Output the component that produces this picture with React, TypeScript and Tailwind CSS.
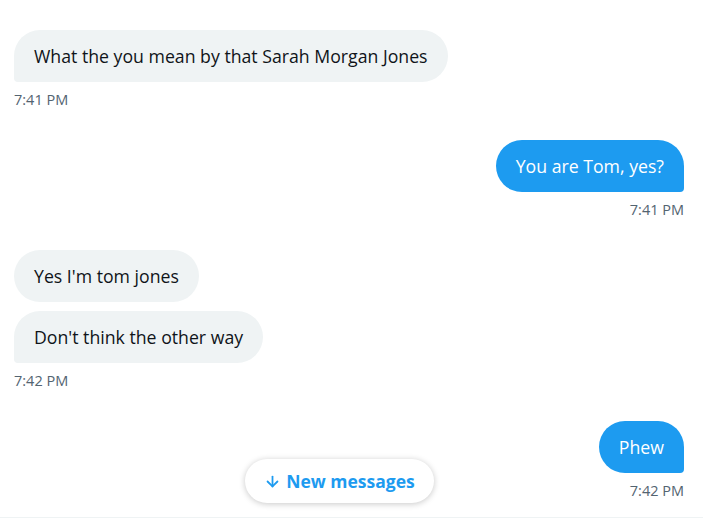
import React from 'react';
import { ArrowDown } from 'lucide-react';

type Msg = {
  text: string;
  mine: boolean;
  tail?: boolean;
};

const messages: Msg[][] = [
  [{ text: 'What the you mean by that Sarah Morgan Jones', mine: false, tail: true }],
  [{ text: 'You are Tom, yes?', mine: true, tail: true }],
  [
    { text: "Yes I'm tom jones", mine: false },
    { text: "Don't think the other way", mine: false, tail: true },
  ],
  [{ text: 'Phew', mine: true, tail: true }],
];

const times = ['7:41 PM', '7:41 PM', '7:42 PM', '7:42 PM'];

const Bubble: React.FC<{ msg: Msg }> = ({ msg }) => {
  const base = 'px-5 py-[14px] text-[17.7px] leading-[24px] rounded-[26px]';
  if (msg.mine) {
    return (
      <div className={`${base} bg-[#1d9bf0] text-white ${msg.tail ? 'rounded-br-[4px]' : ''}`}>
        {msg.text}
      </div>
    );
  }
  return (
    <div className={`${base} bg-[#eff3f4] text-[#0f1419] ${msg.tail ? 'rounded-bl-[4px]' : ''}`}>
      {msg.text}
    </div>
  );
};

export default function App() {
  return (
    <div
      className="relative w-[703px] h-[519px] bg-white overflow-hidden"
      style={{ fontFamily: '"Open Sans", "Noto Sans", sans-serif' }}
    >
      <div className="flex flex-col gap-[30px] pt-[30px] pl-[14px] pr-[19px]">
        {messages.map((group, i) => {
          const mine = group[0].mine;
          return (
            <div key={i} className={`flex flex-col gap-[9px] ${mine ? 'items-end' : 'items-start'}`}>
              {group.map((m, j) => (
                <Bubble key={j} msg={m} />
              ))}
              <div className="text-[14.5px] leading-[20px] text-[#536471] -mt-[1px]">{times[i]}</div>
            </div>
          );
        })}
      </div>

      {/* new messages pill */}
      <div className="absolute left-[245px] top-[459px] w-[189px] h-[44px] rounded-full bg-white shadow-[0_1px_6px_rgba(0,0,0,0.22)] flex items-center justify-center gap-[5px] text-[#1d9bf0] text-[17.5px] font-bold">
        <ArrowDown size={17} strokeWidth={2.5} />
        <span>New messages</span>
      </div>

      <div className="absolute left-0 right-0 top-[517px] h-[2px] border-t border-[#eff3f4]" />
    </div>
  );
}
